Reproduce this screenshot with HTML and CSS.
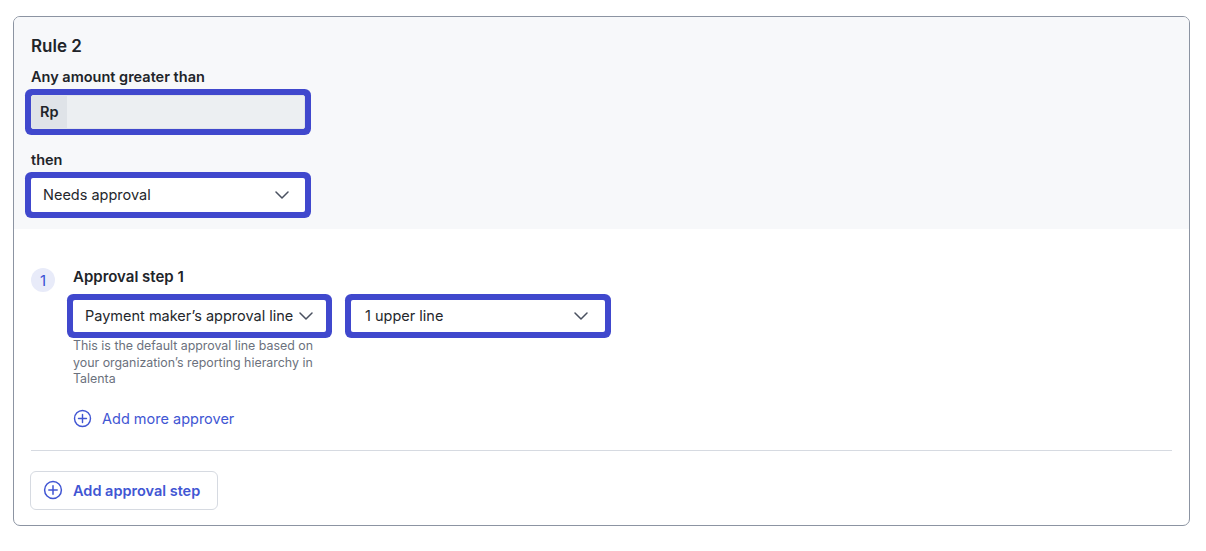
FILE: index.html
```html
<!DOCTYPE html>
<html lang="en">
<head>
    <meta charset="UTF-8">
    <meta name="viewport" content="width=device-width, initial-scale=1.0">
    <title>Approval rule</title>
    <link rel="stylesheet" href="styles.css">
</head>
<body>
    <div class="rule-card">
        <div class="rule-head">
            <div class="rule-title">Rule 2</div>
            <div class="field-label">Any amount greater than</div>
            <div class="amount-input ring">
                <span class="prefix">Rp</span>
                <span class="amount-value"></span>
            </div>
            <div class="field-label then-label">then</div>
            <div class="select ring select-action">
                <span>Needs approval</span>
                <svg class="chevron" viewBox="0 0 14 8" width="14" height="8"><path d="M1 1l6 6 6-6"/></svg>
            </div>
        </div>

        <div class="rule-body">
            <div class="step">
                <div class="step-num">1</div>
                <div class="step-content">
                    <div class="step-title">Approval step 1</div>
                    <div class="step-selects">
                        <div class="step-col">
                            <div class="select ring select-line">
                                <span>Payment maker’s approval line</span>
                                <svg class="chevron" viewBox="0 0 14 8" width="14" height="8"><path d="M1 1l6 6 6-6"/></svg>
                            </div>
                            <div class="hint">This is the default approval line based on your organization’s reporting hierarchy in Talenta</div>
                        </div>
                        <div class="select ring select-level">
                            <span>1 upper line</span>
                            <svg class="chevron" viewBox="0 0 14 8" width="14" height="8"><path d="M1 1l6 6 6-6"/></svg>
                        </div>
                    </div>
                    <a class="add-approver" href="#">
                        <svg class="plus" viewBox="0 0 20 20" width="19" height="19"><circle cx="10" cy="10" r="8.4"/><path d="M10 5.8v8.4M5.8 10h8.4"/></svg>
                        <span>Add more approver</span>
                    </a>
                </div>
            </div>

            <div class="divider"></div>

            <button class="btn-add-step" type="button">
                <svg class="plus" viewBox="0 0 20 20" width="20" height="20"><circle cx="10" cy="10" r="8.4"/><path d="M10 5.8v8.4M5.8 10h8.4"/></svg>
                <span>Add approval step</span>
            </button>
        </div>
    </div>
</body>
</html>
```

FILE: styles.css
```css
* {
    margin: 0;
    padding: 0;
    box-sizing: border-box;
}

body {
    font-family: Inter, 'Noto Sans', Arial, sans-serif;
    background-color: #ffffff;
    color: #212429;
}

.rule-card {
    margin: 16px 0 0 13px;
    width: 1177px;
    height: 510px;
    border: 1px solid #8c94a2;
    border-radius: 7px;
    overflow: hidden;
}

.rule-head {
    background-color: #f7f8fa;
    padding: 17px 17px 17px 17px;
}

.rule-title {
    font-size: 17px;
    font-weight: 600;
    line-height: 24px;
}

.field-label {
    font-size: 14.5px;
    font-weight: 600;
    line-height: 20px;
    margin-top: 9px;
}

.then-label {
    margin-top: 21px;
}

.ring {
    box-shadow: 0 0 0 6px #4048cd;
    border-radius: 2px;
}

.amount-input {
    display: flex;
    width: 274px;
    height: 34px;
    margin-top: 8px;
    background-color: #eceff2;
    border: 1px solid #e1e5ea;
}

.prefix {
    display: flex;
    align-items: center;
    width: 35px;
    padding-left: 8px;
    padding-bottom: 1px;
    background-color: #dfe3e8;
    font-size: 14.5px;
    font-weight: 600;
}

.select {
    display: flex;
    align-items: center;
    justify-content: space-between;
    gap: 6px;
    background-color: #ffffff;
    font-size: 14.5px;
    color: #24272c;
    white-space: nowrap;
}

.select span {
    padding-bottom: 2px;
}

.select-action {
    width: 274px;
    height: 34px;
    margin-top: 8px;
    padding: 0 16px 0 12px;
}

.chevron {
    fill: none;
    stroke: #4a5160;
    stroke-width: 1.5;
    stroke-linecap: round;
    stroke-linejoin: round;
    flex-shrink: 0;
}

.rule-body {
    padding: 38px 17px 15px 17px;
}

.step {
    display: flex;
    gap: 18px;
}

.step-num {
    width: 24px;
    height: 24px;
    margin-top: 1px;
    border-radius: 50%;
    background-color: #e8ebf9;
    color: #3a51d4;
    font-size: 15px;
    display: flex;
    align-items: center;
    justify-content: center;
    flex-shrink: 0;
}

.step-title {
    font-size: 15px;
    font-weight: 600;
    line-height: 20px;
}

.step-selects {
    display: flex;
    gap: 25px;
    margin-top: 13px;
    align-items: flex-start;
}

.select-line {
    width: 253px;
    height: 32px;
    padding: 0 16px 0 12px;
}

.select-level {
    width: 254px;
    height: 32px;
    padding: 0 17px 0 14px;
}

.hint {
    width: 253px;
    margin-top: 6px;
    font-size: 12.4px;
    line-height: 16.5px;
    color: #6b717d;
}

.add-approver {
    display: flex;
    align-items: center;
    gap: 10px;
    margin-top: 21px;
    font-size: 14.5px;
    line-height: 20px;
    color: #4156d3;
    text-decoration: none;
}

.plus {
    fill: none;
    stroke: #4156d3;
    stroke-width: 1.5;
    stroke-linecap: round;
    flex-shrink: 0;
}

.divider {
    height: 1px;
    background-color: #d6dae1;
    margin-top: 21px;
}

.btn-add-step {
    display: flex;
    align-items: center;
    gap: 10px;
    margin-top: 20px;
    margin-left: -1px;
    height: 39px;
    padding: 0 17px 0 12px;
    background-color: #ffffff;
    border: 1px solid #d6dae1;
    border-radius: 6px;
    font-family: inherit;
    font-size: 14.5px;
    font-weight: 600;
    color: #4156d3;
    cursor: pointer;
}
```
